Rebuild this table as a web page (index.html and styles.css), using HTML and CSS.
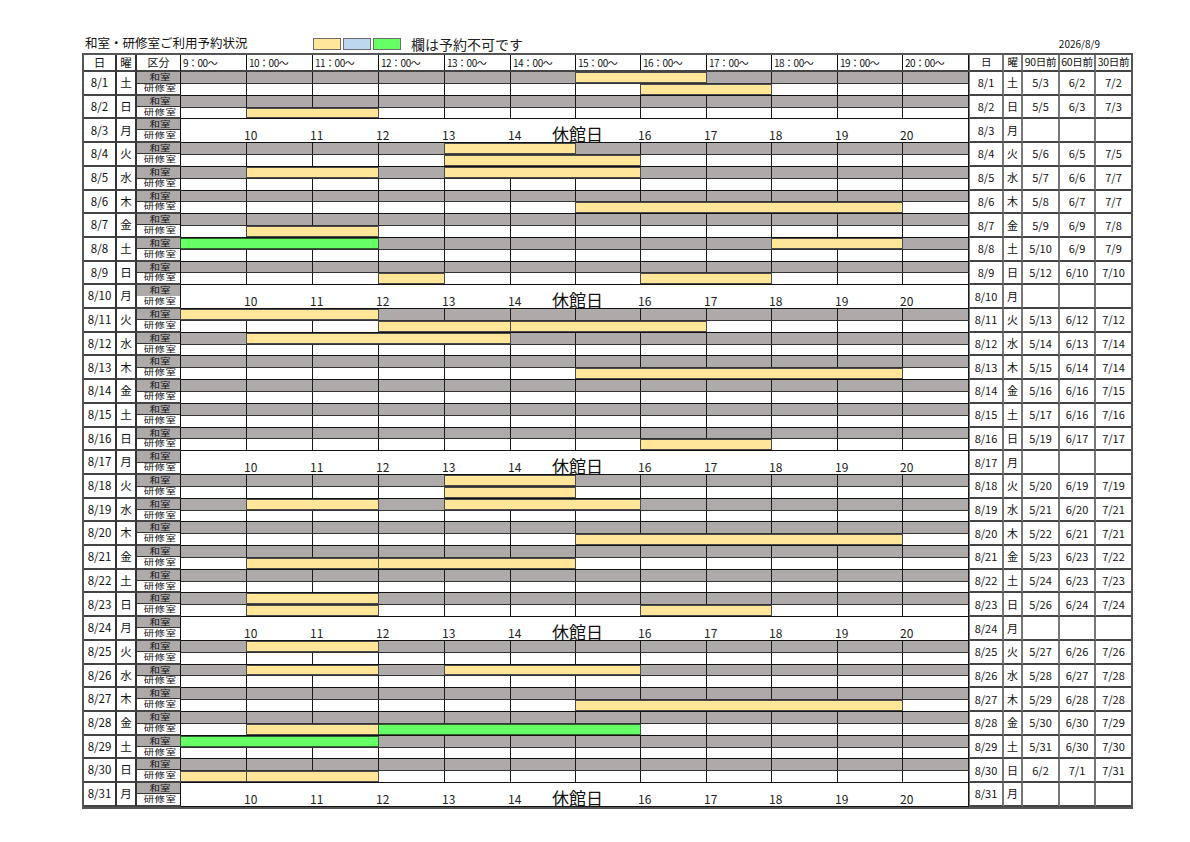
FILE: index.html
```html
<!DOCTYPE html>
<html lang="ja">
<head>
<meta charset="utf-8">
<title>和室・研修室ご利用予約状況</title>
<link rel="stylesheet" href="styles.css">
</head>
<body>
<div class="page">
  <div class="top">
    <div class="title">和室・研修室ご利用予約状況</div>
    <div class="legend">
      <span class="sw y"></span><span class="sw b"></span><span class="sw g"></span>
      <span class="legend-text">欄は予約不可です</span>
    </div>
    <div class="date">2026/8/9</div>
  </div>

  <div class="tbl">
    <div class="row hdr">
      <div class="c d">日</div><div class="c w">曜</div><div class="c kb-h">区分</div>
      <div class="hours">
        <span>9：00～</span><span>10：00～</span><span>11：00～</span><span>12：00～</span><span>13：00～</span><span>14：00～</span><span>15：00～</span><span>16：00～</span><span>17：00～</span><span>18：00～</span><span>19：00～</span><span>20：00～</span>
      </div>
      <div class="c r first">日</div><div class="c r">曜</div><div class="c r">90日前</div><div class="c r">60日前</div><div class="c r last">30日前</div>
    </div>

    <div class="row day">
      <div class="c d">8/1</div><div class="c w">土</div>
      <div class="kb"><span class="kw">和室</span><span class="kk">研修室</span></div>
      <div class="sch"><div class="lane wa"><i class="bar y" style="grid-column:7/9"></i></div><div class="lane"><i class="bar y" style="grid-column:8/10"></i></div></div>
      <div class="c r first">8/1</div><div class="c r">土</div><div class="c r">5/3</div><div class="c r">6/2</div><div class="c r last">7/2</div>
    </div>
    <div class="row day">
      <div class="c d">8/2</div><div class="c w">日</div>
      <div class="kb"><span class="kw">和室</span><span class="kk">研修室</span></div>
      <div class="sch"><div class="lane wa"></div><div class="lane"><i class="bar y" style="grid-column:2/4"></i></div></div>
      <div class="c r first">8/2</div><div class="c r">日</div><div class="c r">5/5</div><div class="c r">6/3</div><div class="c r last">7/3</div>
    </div>
    <div class="row day">
      <div class="c d">8/3</div><div class="c w">月</div>
      <div class="kb"><span class="kw">和室</span><span class="kk">研修室</span></div>
      <div class="closed"><span>10</span><span>11</span><span>12</span><span>13</span><span>14</span><span class="kyu">休館日</span><span>16</span><span>17</span><span>18</span><span>19</span><span>20</span></div>
      <div class="c r first">8/3</div><div class="c r">月</div><div class="c r"></div><div class="c r"></div><div class="c r last"></div>
    </div>
    <div class="row day">
      <div class="c d">8/4</div><div class="c w">火</div>
      <div class="kb"><span class="kw">和室</span><span class="kk">研修室</span></div>
      <div class="sch"><div class="lane wa"><i class="bar y" style="grid-column:5/7"></i></div><div class="lane"><i class="bar y" style="grid-column:5/8"></i></div></div>
      <div class="c r first">8/4</div><div class="c r">火</div><div class="c r">5/6</div><div class="c r">6/5</div><div class="c r last">7/5</div>
    </div>
    <div class="row day">
      <div class="c d">8/5</div><div class="c w">水</div>
      <div class="kb"><span class="kw">和室</span><span class="kk">研修室</span></div>
      <div class="sch"><div class="lane wa"><i class="bar y" style="grid-column:2/4"></i><i class="bar y" style="grid-column:5/8"></i></div><div class="lane"></div></div>
      <div class="c r first">8/5</div><div class="c r">水</div><div class="c r">5/7</div><div class="c r">6/6</div><div class="c r last">7/7</div>
    </div>
    <div class="row day">
      <div class="c d">8/6</div><div class="c w">木</div>
      <div class="kb"><span class="kw">和室</span><span class="kk">研修室</span></div>
      <div class="sch"><div class="lane wa"></div><div class="lane"><i class="bar y" style="grid-column:7/12"></i></div></div>
      <div class="c r first">8/6</div><div class="c r">木</div><div class="c r">5/8</div><div class="c r">6/7</div><div class="c r last">7/7</div>
    </div>
    <div class="row day">
      <div class="c d">8/7</div><div class="c w">金</div>
      <div class="kb"><span class="kw">和室</span><span class="kk">研修室</span></div>
      <div class="sch"><div class="lane wa"></div><div class="lane"><i class="bar y" style="grid-column:2/4"></i></div></div>
      <div class="c r first">8/7</div><div class="c r">金</div><div class="c r">5/9</div><div class="c r">6/9</div><div class="c r last">7/8</div>
    </div>
    <div class="row day">
      <div class="c d">8/8</div><div class="c w">土</div>
      <div class="kb"><span class="kw">和室</span><span class="kk">研修室</span></div>
      <div class="sch"><div class="lane wa"><i class="bar g" style="grid-column:1/4"></i><i class="bar y" style="grid-column:10/12"></i></div><div class="lane"></div></div>
      <div class="c r first">8/8</div><div class="c r">土</div><div class="c r">5/10</div><div class="c r">6/9</div><div class="c r last">7/9</div>
    </div>
    <div class="row day">
      <div class="c d">8/9</div><div class="c w">日</div>
      <div class="kb"><span class="kw">和室</span><span class="kk">研修室</span></div>
      <div class="sch"><div class="lane wa"></div><div class="lane"><i class="bar y" style="grid-column:4/5"></i><i class="bar y" style="grid-column:8/10"></i></div></div>
      <div class="c r first">8/9</div><div class="c r">日</div><div class="c r">5/12</div><div class="c r">6/10</div><div class="c r last">7/10</div>
    </div>
    <div class="row day">
      <div class="c d">8/10</div><div class="c w">月</div>
      <div class="kb"><span class="kw">和室</span><span class="kk">研修室</span></div>
      <div class="closed"><span>10</span><span>11</span><span>12</span><span>13</span><span>14</span><span class="kyu">休館日</span><span>16</span><span>17</span><span>18</span><span>19</span><span>20</span></div>
      <div class="c r first">8/10</div><div class="c r">月</div><div class="c r"></div><div class="c r"></div><div class="c r last"></div>
    </div>
    <div class="row day">
      <div class="c d">8/11</div><div class="c w">火</div>
      <div class="kb"><span class="kw">和室</span><span class="kk">研修室</span></div>
      <div class="sch"><div class="lane wa"><i class="bar y" style="grid-column:1/4"></i></div><div class="lane"><i class="bar y" style="grid-column:4/6"></i><i class="bar y" style="grid-column:6/9"></i></div></div>
      <div class="c r first">8/11</div><div class="c r">火</div><div class="c r">5/13</div><div class="c r">6/12</div><div class="c r last">7/12</div>
    </div>
    <div class="row day">
      <div class="c d">8/12</div><div class="c w">水</div>
      <div class="kb"><span class="kw">和室</span><span class="kk">研修室</span></div>
      <div class="sch"><div class="lane wa"><i class="bar y" style="grid-column:2/6"></i></div><div class="lane"></div></div>
      <div class="c r first">8/12</div><div class="c r">水</div><div class="c r">5/14</div><div class="c r">6/13</div><div class="c r last">7/14</div>
    </div>
    <div class="row day">
      <div class="c d">8/13</div><div class="c w">木</div>
      <div class="kb"><span class="kw">和室</span><span class="kk">研修室</span></div>
      <div class="sch"><div class="lane wa"></div><div class="lane"><i class="bar y" style="grid-column:7/12"></i></div></div>
      <div class="c r first">8/13</div><div class="c r">木</div><div class="c r">5/15</div><div class="c r">6/14</div><div class="c r last">7/14</div>
    </div>
    <div class="row day">
      <div class="c d">8/14</div><div class="c w">金</div>
      <div class="kb"><span class="kw">和室</span><span class="kk">研修室</span></div>
      <div class="sch"><div class="lane wa"></div><div class="lane"></div></div>
      <div class="c r first">8/14</div><div class="c r">金</div><div class="c r">5/16</div><div class="c r">6/16</div><div class="c r last">7/15</div>
    </div>
    <div class="row day">
      <div class="c d">8/15</div><div class="c w">土</div>
      <div class="kb"><span class="kw">和室</span><span class="kk">研修室</span></div>
      <div class="sch"><div class="lane wa"></div><div class="lane"></div></div>
      <div class="c r first">8/15</div><div class="c r">土</div><div class="c r">5/17</div><div class="c r">6/16</div><div class="c r last">7/16</div>
    </div>
    <div class="row day">
      <div class="c d">8/16</div><div class="c w">日</div>
      <div class="kb"><span class="kw">和室</span><span class="kk">研修室</span></div>
      <div class="sch"><div class="lane wa"></div><div class="lane"><i class="bar y" style="grid-column:8/10"></i></div></div>
      <div class="c r first">8/16</div><div class="c r">日</div><div class="c r">5/19</div><div class="c r">6/17</div><div class="c r last">7/17</div>
    </div>
    <div class="row day">
      <div class="c d">8/17</div><div class="c w">月</div>
      <div class="kb"><span class="kw">和室</span><span class="kk">研修室</span></div>
      <div class="closed"><span>10</span><span>11</span><span>12</span><span>13</span><span>14</span><span class="kyu">休館日</span><span>16</span><span>17</span><span>18</span><span>19</span><span>20</span></div>
      <div class="c r first">8/17</div><div class="c r">月</div><div class="c r"></div><div class="c r"></div><div class="c r last"></div>
    </div>
    <div class="row day">
      <div class="c d">8/18</div><div class="c w">火</div>
      <div class="kb"><span class="kw">和室</span><span class="kk">研修室</span></div>
      <div class="sch"><div class="lane wa"><i class="bar y" style="grid-column:5/7"></i></div><div class="lane"><i class="bar y" style="grid-column:5/7"></i></div></div>
      <div class="c r first">8/18</div><div class="c r">火</div><div class="c r">5/20</div><div class="c r">6/19</div><div class="c r last">7/19</div>
    </div>
    <div class="row day">
      <div class="c d">8/19</div><div class="c w">水</div>
      <div class="kb"><span class="kw">和室</span><span class="kk">研修室</span></div>
      <div class="sch"><div class="lane wa"><i class="bar y" style="grid-column:2/4"></i><i class="bar y" style="grid-column:5/8"></i></div><div class="lane"></div></div>
      <div class="c r first">8/19</div><div class="c r">水</div><div class="c r">5/21</div><div class="c r">6/20</div><div class="c r last">7/21</div>
    </div>
    <div class="row day">
      <div class="c d">8/20</div><div class="c w">木</div>
      <div class="kb"><span class="kw">和室</span><span class="kk">研修室</span></div>
      <div class="sch"><div class="lane wa"></div><div class="lane"><i class="bar y" style="grid-column:7/12"></i></div></div>
      <div class="c r first">8/20</div><div class="c r">木</div><div class="c r">5/22</div><div class="c r">6/21</div><div class="c r last">7/21</div>
    </div>
    <div class="row day">
      <div class="c d">8/21</div><div class="c w">金</div>
      <div class="kb"><span class="kw">和室</span><span class="kk">研修室</span></div>
      <div class="sch"><div class="lane wa"></div><div class="lane"><i class="bar y" style="grid-column:2/4"></i><i class="bar y" style="grid-column:4/7"></i></div></div>
      <div class="c r first">8/21</div><div class="c r">金</div><div class="c r">5/23</div><div class="c r">6/23</div><div class="c r last">7/22</div>
    </div>
    <div class="row day">
      <div class="c d">8/22</div><div class="c w">土</div>
      <div class="kb"><span class="kw">和室</span><span class="kk">研修室</span></div>
      <div class="sch"><div class="lane wa"></div><div class="lane"></div></div>
      <div class="c r first">8/22</div><div class="c r">土</div><div class="c r">5/24</div><div class="c r">6/23</div><div class="c r last">7/23</div>
    </div>
    <div class="row day">
      <div class="c d">8/23</div><div class="c w">日</div>
      <div class="kb"><span class="kw">和室</span><span class="kk">研修室</span></div>
      <div class="sch"><div class="lane wa"><i class="bar y" style="grid-column:2/4"></i></div><div class="lane"><i class="bar y" style="grid-column:2/4"></i><i class="bar y" style="grid-column:8/10"></i></div></div>
      <div class="c r first">8/23</div><div class="c r">日</div><div class="c r">5/26</div><div class="c r">6/24</div><div class="c r last">7/24</div>
    </div>
    <div class="row day">
      <div class="c d">8/24</div><div class="c w">月</div>
      <div class="kb"><span class="kw">和室</span><span class="kk">研修室</span></div>
      <div class="closed"><span>10</span><span>11</span><span>12</span><span>13</span><span>14</span><span class="kyu">休館日</span><span>16</span><span>17</span><span>18</span><span>19</span><span>20</span></div>
      <div class="c r first">8/24</div><div class="c r">月</div><div class="c r"></div><div class="c r"></div><div class="c r last"></div>
    </div>
    <div class="row day">
      <div class="c d">8/25</div><div class="c w">火</div>
      <div class="kb"><span class="kw">和室</span><span class="kk">研修室</span></div>
      <div class="sch"><div class="lane wa"><i class="bar y" style="grid-column:2/4"></i></div><div class="lane"></div></div>
      <div class="c r first">8/25</div><div class="c r">火</div><div class="c r">5/27</div><div class="c r">6/26</div><div class="c r last">7/26</div>
    </div>
    <div class="row day">
      <div class="c d">8/26</div><div class="c w">水</div>
      <div class="kb"><span class="kw">和室</span><span class="kk">研修室</span></div>
      <div class="sch"><div class="lane wa"><i class="bar y" style="grid-column:2/4"></i><i class="bar y" style="grid-column:5/8"></i></div><div class="lane"></div></div>
      <div class="c r first">8/26</div><div class="c r">水</div><div class="c r">5/28</div><div class="c r">6/27</div><div class="c r last">7/28</div>
    </div>
    <div class="row day">
      <div class="c d">8/27</div><div class="c w">木</div>
      <div class="kb"><span class="kw">和室</span><span class="kk">研修室</span></div>
      <div class="sch"><div class="lane wa"></div><div class="lane"><i class="bar y" style="grid-column:7/12"></i></div></div>
      <div class="c r first">8/27</div><div class="c r">木</div><div class="c r">5/29</div><div class="c r">6/28</div><div class="c r last">7/28</div>
    </div>
    <div class="row day">
      <div class="c d">8/28</div><div class="c w">金</div>
      <div class="kb"><span class="kw">和室</span><span class="kk">研修室</span></div>
      <div class="sch"><div class="lane wa"></div><div class="lane"><i class="bar y" style="grid-column:2/4"></i><i class="bar g" style="grid-column:4/8"></i></div></div>
      <div class="c r first">8/28</div><div class="c r">金</div><div class="c r">5/30</div><div class="c r">6/30</div><div class="c r last">7/29</div>
    </div>
    <div class="row day">
      <div class="c d">8/29</div><div class="c w">土</div>
      <div class="kb"><span class="kw">和室</span><span class="kk">研修室</span></div>
      <div class="sch"><div class="lane wa"><i class="bar g" style="grid-column:1/4"></i></div><div class="lane"></div></div>
      <div class="c r first">8/29</div><div class="c r">土</div><div class="c r">5/31</div><div class="c r">6/30</div><div class="c r last">7/30</div>
    </div>
    <div class="row day">
      <div class="c d">8/30</div><div class="c w">日</div>
      <div class="kb"><span class="kw">和室</span><span class="kk">研修室</span></div>
      <div class="sch"><div class="lane wa"></div><div class="lane"><i class="bar y" style="grid-column:1/2"></i><i class="bar y" style="grid-column:2/4"></i></div></div>
      <div class="c r first">8/30</div><div class="c r">日</div><div class="c r">6/2</div><div class="c r">7/1</div><div class="c r last">7/31</div>
    </div>
    <div class="row day">
      <div class="c d">8/31</div><div class="c w">月</div>
      <div class="kb"><span class="kw">和室</span><span class="kk">研修室</span></div>
      <div class="closed"><span>10</span><span>11</span><span>12</span><span>13</span><span>14</span><span class="kyu">休館日</span><span>16</span><span>17</span><span>18</span><span>19</span><span>20</span></div>
      <div class="c r first">8/31</div><div class="c r">月</div><div class="c r"></div><div class="c r"></div><div class="c r last"></div>
    </div>
  </div>
</div>
</body>
</html>
```

FILE: styles.css
```css
* { box-sizing: border-box; margin: 0; padding: 0; }

body {
  margin: 0;
  background: #fff;
  color: #111;
  font-family: "Noto Sans CJK JP", "Noto Sans", sans-serif;
}

.page {
  width: 1051px;
  margin-left: 82px;
  padding-top: 34px;
}

/* top line */
.top {
  display: flex;
  align-items: center;
  height: 19px;
}
.title {
  width: 231px;
  padding-left: 3px;
  font-size: 12.5px;
  line-height: 1;
}
.legend {
  display: flex;
  align-items: center;
  gap: 2px;
}
.sw {
  width: 28px;
  height: 12px;
  border: 1px solid #6d6d6d;
}
.sw.y { background: #ffe699; }
.sw.b { background: #bdd7ee; }
.sw.g { background: #66ff66; }
.legend-text {
  margin-left: 8px;
  font-size: 14px;
  line-height: 1;
  color: #222;
}
.date {
  margin-left: auto;
  margin-right: 33px;
  font-size: 10px;
  line-height: 1;
}

/* table */
.tbl {
  height: 756px;
  border: 2px solid #555;
  display: flex;
  flex-direction: column;
}
.row {
  display: grid;
  grid-template-columns: 33px 20px 44px 788px 35px 19px 37px 36px 35px;
}
.hdr { height: 17px; }
.day { flex: 1; min-height: 0; }

.c {
  display: flex;
  align-items: center;
  justify-content: center;
  font-size: 11.5px;
  line-height: 1;
  border-bottom: 2px solid #444;
  white-space: nowrap;
}
.c.d, .c.w { border-right: 2px solid #333; }
.kb-h { border-right: 1px solid #111; font-size: 11px; }
.c.r {
  border-right: 2px solid #777;
  font-size: 11px;
}
.c.r.first { border-left: 1px solid #777; }
.c.r.last { border-right: none; }
.hdr .c.r { font-size: 10.5px; letter-spacing: -0.3px; }

/* hour header */
.hours {
  display: grid;
  grid-template-columns: 66px 66px 66px 66px 66px 65px 65px 66px 65px 66px 65px 66px;
  border-bottom: 2px solid #444;
}
.hours span {
  border-right: 1px solid #111;
  font-size: 10px;
  line-height: 15px;
  padding-left: 2px;
  letter-spacing: -0.5px;
  white-space: nowrap;
}

/* 区分 : gray upper half, divider, white lower half */
.kb {
  display: flex;
  flex-direction: column;
  border-right: 1px solid #111;
  border-bottom: 2px solid #444;
  background: linear-gradient(to bottom,
    #aeaaaa calc(50% - 0.5px), #333 calc(50% - 0.5px),
    #333 calc(50% + 0.5px), #fff calc(50% + 0.5px));
}
.kb span {
  flex: 1;
  min-height: 0;
  display: flex;
  align-items: center;
  justify-content: center;
  font-size: 10.5px;
  line-height: 10px;
  padding-left: 3px;
  transform: scaleY(0.72);
}
.kk { letter-spacing: 0.4px; }

/* schedule lanes */
.sch {
  display: flex;
  flex-direction: column;
  border-bottom: 1px solid #111;
}
.lane {
  flex: 1;
  display: grid;
  grid-template-columns: 66px 66px 66px 66px 66px 65px 65px 66px 65px 66px 65px 66px;
  background-color: #fff;
  background-image:
    linear-gradient(#1a1a1a, #1a1a1a), linear-gradient(#1a1a1a, #1a1a1a),
    linear-gradient(#1a1a1a, #1a1a1a), linear-gradient(#1a1a1a, #1a1a1a),
    linear-gradient(#1a1a1a, #1a1a1a), linear-gradient(#1a1a1a, #1a1a1a),
    linear-gradient(#1a1a1a, #1a1a1a), linear-gradient(#1a1a1a, #1a1a1a),
    linear-gradient(#1a1a1a, #1a1a1a), linear-gradient(#1a1a1a, #1a1a1a),
    linear-gradient(#1a1a1a, #1a1a1a), linear-gradient(#1a1a1a, #1a1a1a);
  background-repeat: no-repeat;
  background-size: 1px 100%;
  background-position:
    65px 0, 131px 0, 197px 0, 263px 0, 329px 0, 394px 0,
    459px 0, 525px 0, 590px 0, 656px 0, 721px 0, 787px 0;
}
.lane.wa {
  background-color: #aeaaaa;
  border-bottom: 1px solid #333;
}
.bar {
  grid-row: 1;
  margin-left: -1px;
  border: 1px solid #4a4a4a;
}
.bar.y { background: #ffe699; }
.bar.g { background: #66ff66; border-color: #2f5f2f; }

/* closed day */
.closed {
  display: grid;
  grid-template-columns: 66px 66px 66px 66px 66px 65px 65px 66px 65px 66px 65px 66px;
  align-items: end;
  background: #fff;
  border-right: 1px solid #1a1a1a;
  border-bottom: 1px solid #111;
}
.closed span {
  font-size: 12px;
  line-height: 12px;
  margin-left: -3px;
  margin-bottom: 1px;
  color: #222;
}
.closed span:first-child { grid-column: 2; }
.closed .kyu {
  font-size: 17px;
  line-height: 17px;
  margin-left: -24px;
  margin-bottom: 0;
  color: #111;
}
```
